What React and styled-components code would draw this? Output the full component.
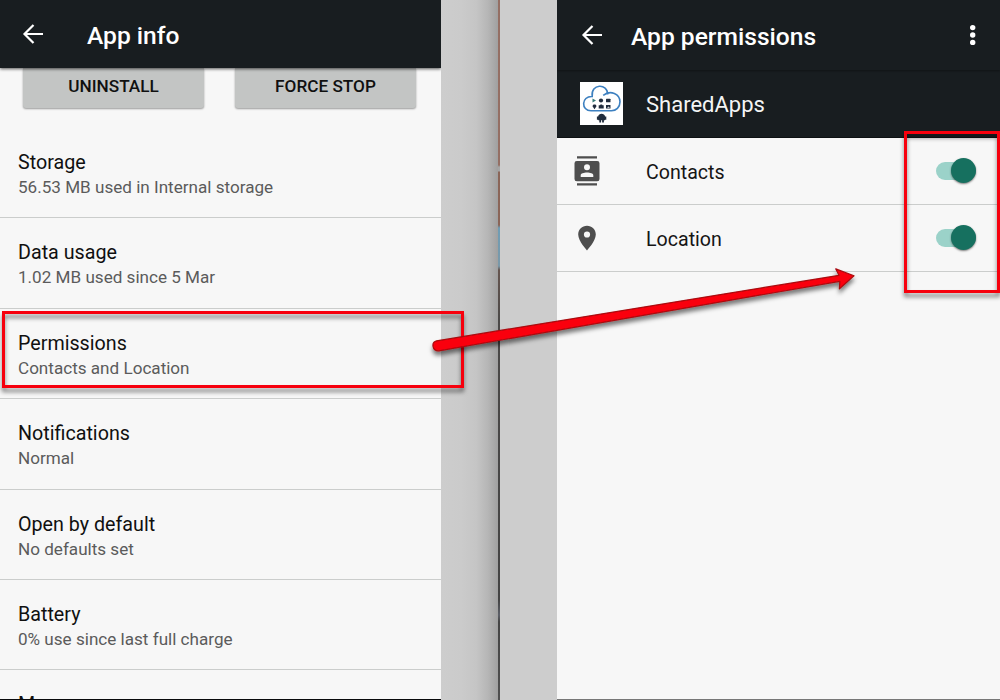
import React from 'react';
import styled, { createGlobalStyle } from 'styled-components';

const GlobalStyle = createGlobalStyle`
  * { box-sizing: border-box; }
  body { margin: 0; overflow: hidden; background: #cdcdcd; font-family: Roboto, "Liberation Sans", sans-serif; }
`;

const Stage = styled.main`
  position: relative;
  display: grid;
  grid-template-columns: 441px 57px 2px 57px 443px;
  width: 1000px;
  height: 700px;
  overflow: hidden;
`;

const Screen = styled.section`
  display: flex;
  flex-direction: column;
  height: 700px;
  overflow: hidden;
  background: #f7f7f7;
  border-bottom: ${(p) => p.$edge};
`;

const Gutter = styled.div`
  background: ${(p) => (p.$shaded
    ? 'linear-gradient(90deg, #cdcdcd 0%, #cbcbcb 35%, #c5c5c5 62%, #b6b6b6 82%, #a0a0a0 100%)'
    : '#cdcdcd')};
`;

const Seam = styled.div`
  background: linear-gradient(180deg, #946f64 0, #946f64 165px, #a5a5a5 167px, #a5a5a5 171px, #8a6558 172px, #8a6558 225px,
    #6f9db5 228px, #7a98a8 266px, #665650 270px, #4b4948 320px, #444 600px, #5d6069 615px, #444 622px, #505050 700px);
`;

const AppBar = styled.header`
  position: relative;
  z-index: 1;
  display: flex;
  align-items: center;
  flex: none;
  height: ${(p) => p.$height};
  padding: 2px 20px 0 ${(p) => p.$inset};
  color: #fff;
  background: #181d20;
  box-shadow: ${(p) => p.$shadow};
`;

const BackArrow = styled.svg`
  flex: none;
  width: 22px;
  height: 20px;
  margin-top: -2px;
`;

const BarTitle = styled.h1`
  flex: 1;
  margin: 1px 0 0 ${(p) => p.$gap};
  font-size: 24.6px;
  font-weight: 500;
  line-height: 30px;
  white-space: nowrap;
`;

const Overflow = styled.svg`
  width: 20px;
  height: 24px;
`;

const Actions = styled.div`
  display: flex;
  gap: 31px;
  flex: none;
  height: 59.8px;
  padding: 0 22.5px;
`;

const ActionButton = styled.button`
  width: 181px;
  height: 39.5px;
  padding: 1px 0 3px 1px;
  border: 0;
  border-radius: 0 0 3px 3px;
  background: #c3c5c4;
  box-shadow: 0 1px 2px rgba(0, 0, 0, 0.38);
  color: #101010;
  font: 500 17.2px/35px Roboto, sans-serif;
`;

const Setting = styled.div`
  flex: none;
  height: 90.45px;
  padding: 22px 18px 0;
  border-bottom: 1px solid #cbcdcc;
`;

const SettingName = styled.div`
  color: #101010;
  font-size: 19.7px;
  line-height: 25px;
`;

const SettingValue = styled.div`
  color: #5b5b5b;
  font-size: 17.1px;
  line-height: 24px;
  white-space: nowrap;
`;

const AppBanner = styled.div`
  display: flex;
  align-items: center;
  flex: none;
  height: 68px;
  padding: 0 23px;
  gap: 23px;
  border-bottom: 1px solid #0d1113;
  background: #181d20;
  color: #f4f5f5;
  font-size: 22px;
`;

const AppName = styled.span`
  padding-top: 2px;
`;

const AppLogo = styled.svg`
  width: 43px;
  height: 43px;
  background: #fff;
`;

const Permission = styled.div`
  display: grid;
  grid-template-columns: 60px 1fr 41px;
  align-items: center;
  flex: none;
  height: 67px;
  padding: 0 23px 0 29px;
  border-bottom: 1px solid #cbcdcc;
  color: #151515;
  font-size: 19.6px;
`;

const PermissionIcon = styled.svg`
  width: 32px;
  height: 32px;
  margin-left: -14.7px;
  fill: #4e4e4e;
`;

const PermissionName = styled.span`
  padding-top: 3px;
`;

const Switch = styled.div`
  display: flex;
  align-items: center;
  justify-content: flex-end;
  width: 40px;
  height: 18px;
  margin-bottom: 1px;
  border-radius: 9px;
  background: #9bd2c9;
`;

const Thumb = styled.span`
  width: 25px;
  height: 25px;
  border-radius: 50%;
  background: #16705f;
  box-shadow: 0 1px 2px rgba(0, 0, 0, 0.5);
`;

const Annotations = styled.svg`
  position: absolute;
  inset: 0;
  z-index: 2;
  pointer-events: none;
`;

const settings = [
  ['Storage', '56.53 MB used in Internal storage'],
  ['Data usage', '1.02 MB used since 5 Mar'],
  ['Permissions', 'Contacts and Location'],
  ['Notifications', 'Normal'],
  ['Open by default', 'No defaults set'],
  ['Battery', '0% use since last full charge'],
  ['Memory', ''],
];

const Back = () => (
  <BackArrow viewBox="0 0 22 20" fill="none" stroke="#fff" strokeWidth="2.2">
    <path d="M21 10H3M11.5 1L2.5 10L11.5 19" />
  </BackArrow>
);

const Logo = () => (
  <AppLogo viewBox="0 0 43 43">
    <path
      d="M11 28.8C1 28.8 1 14 12.2 14.5C10.4 1.5 27.8 1 27.7 12.5M23.2 13.3C30.5 7.5 40 12 40 19.8C40 25.5 36 28.8 31.5 28.8H11"
      fill="none" stroke="#3d80c0" strokeWidth="1.6" />
    <g fill="#202c3d">
      <path d="M12.5 16.5L16 18.5L12.5 20.5Z" fill="#397c79" />
      <circle cx="21" cy="18.5" r="2.1" />
      <rect x="26" y="16.7" width="4.5" height="3.6" rx=".6" />
      <path d="M14.5 27.2L12.7 24.4C12 21.8 17 21.8 16.3 24.4Z" />
      <path d="M18.7 23.2H20L20.5 22.5H22L22.5 23.2H23.7V26.6H18.7Z" />
      <path d="M26 23H30.5V26.5H26ZM27 25.8H29.8L28.7 24.5Z" fillRule="evenodd" />
      <path d="M18.2 34.2C18.5 30.8 24.7 30.8 25 34.2ZM18.2 34.2H25V38.2H23.9V40.5H22.1V38.2H21.1V40.5H19.3V38.2H18.2ZM16.9 34.4H18.2V37.7H16.9ZM25 34.4H26.3V37.7H25Z" />
    </g>
  </AppLogo>
);

const ContactsIcon = () => (
  <PermissionIcon viewBox="0 0 32 32">
    <path d="M6 1.3H26V3.6H6ZM6 28.3H26V30.6H6Z" />
    <path fillRule="evenodd" d="M5.8 6H26.2Q28.5 6 28.5 8.3V24Q28.5 26.2 26.2 26.2H5.8Q3.5 26.2 3.5 24V8.3Q3.5 6 5.8 6ZM16 9.2A3 3 0 1 0 16 15.2A3 3 0 1 0 16 9.2ZM9.7 22V20.3C9.7 16.6 22.3 16.6 22.3 20.3V22Z" />
  </PermissionIcon>
);

const LocationIcon = () => (
  <PermissionIcon viewBox="0 0 32 32">
    <path fillRule="evenodd" d="M16 3.7C11.1 3.7 7.2 7.6 7.2 12.5C7.2 19.1 16 28.4 16 28.4S24.8 19.1 24.8 12.5C24.8 7.6 20.9 3.7 16 3.7ZM16 9.4A3.1 3.1 0 1 1 16 15.6A3.1 3.1 0 1 1 16 9.4Z" />
  </PermissionIcon>
);

const permissions = [
  ['Contacts', ContactsIcon],
  ['Location', LocationIcon],
];

export default function App() {
  return (
    <>
      <GlobalStyle />
      <Stage>
        <Screen $edge="1.5px solid #08090b">
          <AppBar $height="68px" $inset="22px" $shadow="0 1px 3px rgba(0,0,0,.65)">
            <Back />
            <BarTitle $gap="43px">App info</BarTitle>
          </AppBar>
          <Actions>
            <ActionButton>UNINSTALL</ActionButton>
            <ActionButton>FORCE STOP</ActionButton>
          </Actions>
          {settings.map(([name, value]) => (
            <Setting key={name}>
              <SettingName>{name}</SettingName>
              <SettingValue>{value}</SettingValue>
            </Setting>
          ))}
        </Screen>
        <Gutter $shaded />
        <Seam />
        <Gutter />
        <Screen $edge="1px solid #777">
          <AppBar $height="70px" $inset="24px" $shadow="0 1px 2px rgba(0,0,0,.35)">
            <Back />
            <BarTitle $gap="28px">App permissions</BarTitle>
            <Overflow viewBox="0 0 20 24" fill="#fff">
              <circle cx="12.7" cy="3.6" r="2.7" />
              <circle cx="12.7" cy="11" r="2.7" />
              <circle cx="12.7" cy="18.4" r="2.7" />
            </Overflow>
          </AppBar>
          <AppBanner>
            <Logo />
            <AppName>SharedApps</AppName>
          </AppBanner>
          {permissions.map(([name, Icon]) => (
            <Permission key={name}>
              <Icon />
              <PermissionName>{name}</PermissionName>
              <Switch><Thumb /></Switch>
            </Permission>
          ))}
        </Screen>
        <Annotations width="1000" height="700" viewBox="0 0 1000 700">
          <defs>
            <filter id="drop" x="-10%" y="-20%" width="120%" height="150%">
              <feDropShadow dx="0" dy="4" stdDeviation="2" floodColor="#000" floodOpacity=".5" />
            </filter>
          </defs>
          <g fill="none" stroke="#f70410" strokeWidth="3" filter="url(#drop)">
            <rect x="3.5" y="312.5" width="459" height="74" />
            <rect x="905.5" y="132.5" width="93" height="159" />
          </g>
          <path
            d="M436.6 340.8L839 275.3L835.8 268.9L854 275.8L839.4 288.9L839.8 281.3L438.8 350.8C432 351 431 342 436.6 340.8Z"
            fill="#fa0008" stroke="#a90a10" strokeWidth="1.2" strokeLinejoin="round" filter="url(#drop)" />
        </Annotations>
      </Stage>
    </>
  );
}
